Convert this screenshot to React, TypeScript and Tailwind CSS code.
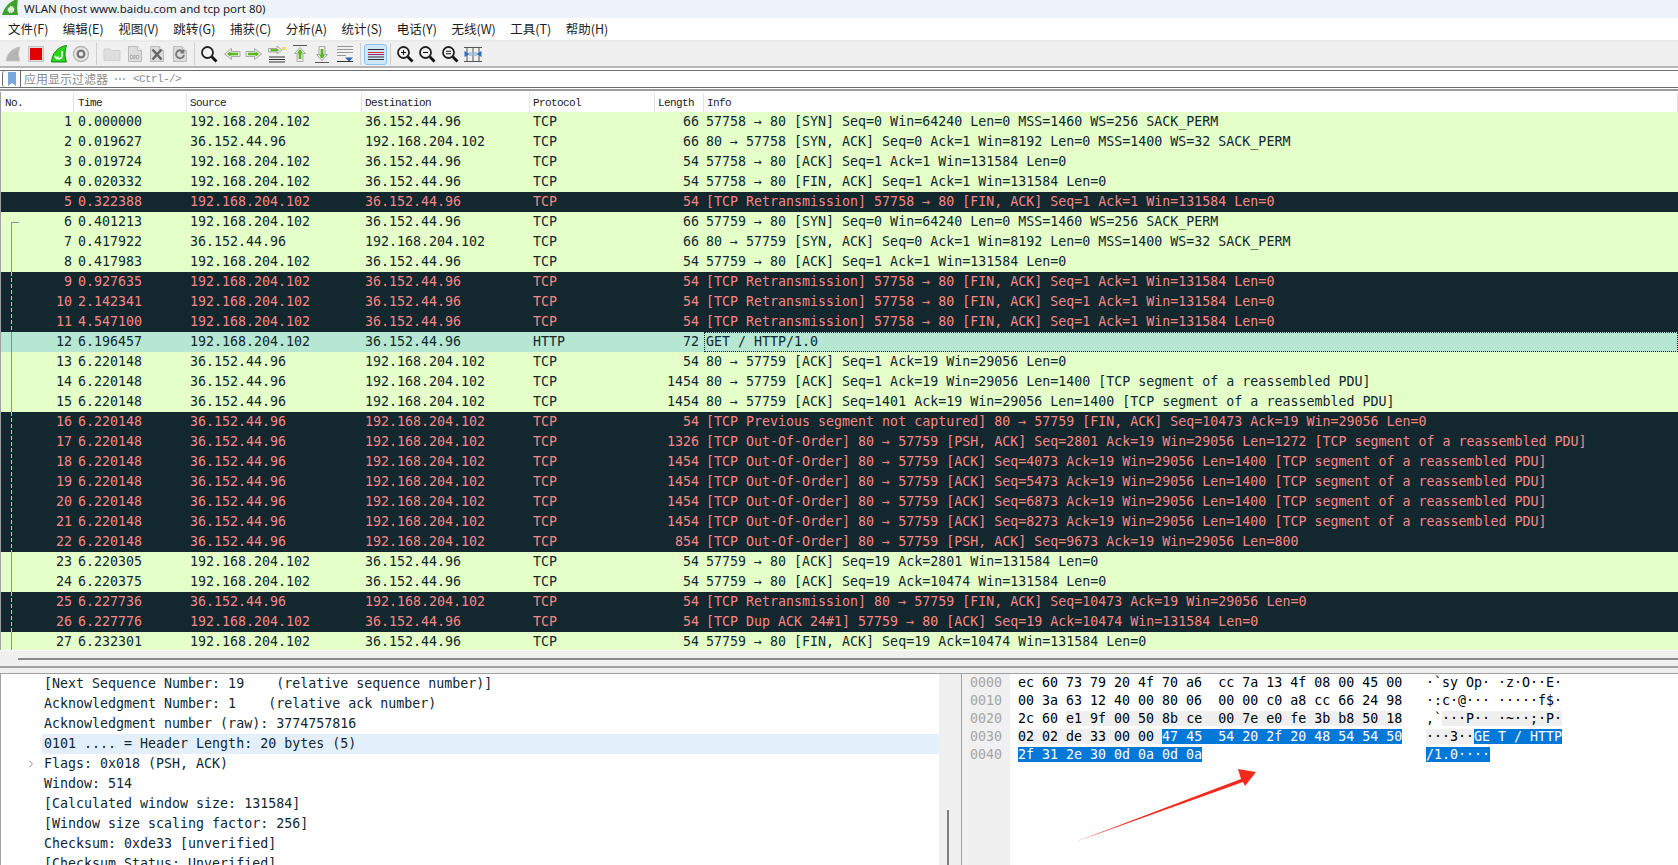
import React from 'react'
import { ChevronRight } from 'lucide-react'

type Kind = 'ok' | 'bad' | 'sel'
type Row = [number, string, string, string, string, number, string, Kind]

const A = '192.168.204.102'
const B = '36.152.44.96'

const rows: Row[] = [
  [1, '0.000000', A, B, 'TCP', 66, '57758 → 80 [SYN] Seq=0 Win=64240 Len=0 MSS=1460 WS=256 SACK_PERM', 'ok'],
  [2, '0.019627', B, A, 'TCP', 66, '80 → 57758 [SYN, ACK] Seq=0 Ack=1 Win=8192 Len=0 MSS=1400 WS=32 SACK_PERM', 'ok'],
  [3, '0.019724', A, B, 'TCP', 54, '57758 → 80 [ACK] Seq=1 Ack=1 Win=131584 Len=0', 'ok'],
  [4, '0.020332', A, B, 'TCP', 54, '57758 → 80 [FIN, ACK] Seq=1 Ack=1 Win=131584 Len=0', 'ok'],
  [5, '0.322388', A, B, 'TCP', 54, '[TCP Retransmission] 57758 → 80 [FIN, ACK] Seq=1 Ack=1 Win=131584 Len=0', 'bad'],
  [6, '0.401213', A, B, 'TCP', 66, '57759 → 80 [SYN] Seq=0 Win=64240 Len=0 MSS=1460 WS=256 SACK_PERM', 'ok'],
  [7, '0.417922', B, A, 'TCP', 66, '80 → 57759 [SYN, ACK] Seq=0 Ack=1 Win=8192 Len=0 MSS=1400 WS=32 SACK_PERM', 'ok'],
  [8, '0.417983', A, B, 'TCP', 54, '57759 → 80 [ACK] Seq=1 Ack=1 Win=131584 Len=0', 'ok'],
  [9, '0.927635', A, B, 'TCP', 54, '[TCP Retransmission] 57758 → 80 [FIN, ACK] Seq=1 Ack=1 Win=131584 Len=0', 'bad'],
  [10, '2.142341', A, B, 'TCP', 54, '[TCP Retransmission] 57758 → 80 [FIN, ACK] Seq=1 Ack=1 Win=131584 Len=0', 'bad'],
  [11, '4.547100', A, B, 'TCP', 54, '[TCP Retransmission] 57758 → 80 [FIN, ACK] Seq=1 Ack=1 Win=131584 Len=0', 'bad'],
  [12, '6.196457', A, B, 'HTTP', 72, 'GET / HTTP/1.0', 'sel'],
  [13, '6.220148', B, A, 'TCP', 54, '80 → 57759 [ACK] Seq=1 Ack=19 Win=29056 Len=0', 'ok'],
  [14, '6.220148', B, A, 'TCP', 1454, '80 → 57759 [ACK] Seq=1 Ack=19 Win=29056 Len=1400 [TCP segment of a reassembled PDU]', 'ok'],
  [15, '6.220148', B, A, 'TCP', 1454, '80 → 57759 [ACK] Seq=1401 Ack=19 Win=29056 Len=1400 [TCP segment of a reassembled PDU]', 'ok'],
  [16, '6.220148', B, A, 'TCP', 54, '[TCP Previous segment not captured] 80 → 57759 [FIN, ACK] Seq=10473 Ack=19 Win=29056 Len=0', 'bad'],
  [17, '6.220148', B, A, 'TCP', 1326, '[TCP Out-Of-Order] 80 → 57759 [PSH, ACK] Seq=2801 Ack=19 Win=29056 Len=1272 [TCP segment of a reassembled PDU]', 'bad'],
  [18, '6.220148', B, A, 'TCP', 1454, '[TCP Out-Of-Order] 80 → 57759 [ACK] Seq=4073 Ack=19 Win=29056 Len=1400 [TCP segment of a reassembled PDU]', 'bad'],
  [19, '6.220148', B, A, 'TCP', 1454, '[TCP Out-Of-Order] 80 → 57759 [ACK] Seq=5473 Ack=19 Win=29056 Len=1400 [TCP segment of a reassembled PDU]', 'bad'],
  [20, '6.220148', B, A, 'TCP', 1454, '[TCP Out-Of-Order] 80 → 57759 [ACK] Seq=6873 Ack=19 Win=29056 Len=1400 [TCP segment of a reassembled PDU]', 'bad'],
  [21, '6.220148', B, A, 'TCP', 1454, '[TCP Out-Of-Order] 80 → 57759 [ACK] Seq=8273 Ack=19 Win=29056 Len=1400 [TCP segment of a reassembled PDU]', 'bad'],
  [22, '6.220148', B, A, 'TCP', 854, '[TCP Out-Of-Order] 80 → 57759 [PSH, ACK] Seq=9673 Ack=19 Win=29056 Len=800', 'bad'],
  [23, '6.220305', A, B, 'TCP', 54, '57759 → 80 [ACK] Seq=19 Ack=2801 Win=131584 Len=0', 'ok'],
  [24, '6.220375', A, B, 'TCP', 54, '57759 → 80 [ACK] Seq=19 Ack=10474 Win=131584 Len=0', 'ok'],
  [25, '6.227736', B, A, 'TCP', 54, '[TCP Retransmission] 80 → 57759 [FIN, ACK] Seq=10473 Ack=19 Win=29056 Len=0', 'bad'],
  [26, '6.227776', A, B, 'TCP', 54, '[TCP Dup ACK 24#1] 57759 → 80 [ACK] Seq=19 Ack=10474 Win=131584 Len=0', 'bad'],
  [27, '6.232301', A, B, 'TCP', 54, '57759 → 80 [FIN, ACK] Seq=19 Ack=10474 Win=131584 Len=0', 'ok'],
]

const menus = ['文件(F)', '编辑(E)', '视图(V)', '跳转(G)', '捕获(C)', '分析(A)', '统计(S)', '电话(Y)', '无线(W)', '工具(T)', '帮助(H)']

const details = [
  '[Next Sequence Number: 19    (relative sequence number)]',
  'Acknowledgment Number: 1    (relative ack number)',
  'Acknowledgment number (raw): 3774757816',
  '0101 .... = Header Length: 20 bytes (5)',
  'Flags: 0x018 (PSH, ACK)',
  'Window: 514',
  '[Calculated window size: 131584]',
  '[Window size scaling factor: 256]',
  'Checksum: 0xde33 [unverified]',
  '[Checksum Status: Unverified]',
]

// plain / grey / blue segments per dump line: [text, style]
type Seg = [string, '' | 'g' | 'b']
const hexLines: { off: string; hex: Seg[]; asc: Seg[] }[] = [
  { off: '0000', hex: [['ec 60 73 79 20 4f 70 a6  cc 7a 13 4f 08 00 45 00', '']], asc: [['·`sy Op· ·z·O··E·', '']] },
  { off: '0010', hex: [['00 3a 63 12 40 00 80 06  00 00 c0 a8 cc 66 24 98', '']], asc: [['·:c·@··· ·····f$·', '']] },
  { off: '0020', hex: [['2c 60 ', ''], ['e1 9f 00 50 8b ce  00 7e e0 fe 3b b8 50 18', 'g']], asc: [[',`', ''], ['···P·· ·~··;·P·', 'g']] },
  { off: '0030', hex: [['02 02 de 33 00 00 ', 'g'], ['47 45  54 20 2f 20 48 54 54 50', 'b']], asc: [['···3··', 'g'], ['GE T / HTTP', 'b']] },
  { off: '0040', hex: [['2f 31 2e 30 0d 0a 0d 0a', 'b']], asc: [['/1.0····', 'b']] },
]

const Ic = ({ children }: { children: React.ReactNode }) => (
  <svg width="20" height="20" viewBox="0 0 20 20" fill="none">{children}</svg>
)

const Lens = ({ mark }: { mark?: 'plus' | 'minus' | 'eq' }) => (
  <Ic>
    <circle cx="8.5" cy="8.5" r="5.5" fill="#f4f4f4" stroke="#222" strokeWidth="1.8" />
    <path d="M12.8 12.8 L17.5 17.5" stroke="#111" strokeWidth="2.8" />
    {mark && <path d={mark === 'plus' ? 'M6 8.5h5M8.5 6v5' : mark === 'minus' ? 'M6 8.5h5' : 'M6 7.3h5M6 9.8h5'} stroke="#111" strokeWidth="1.1" />}
  </Ic>
)

const FileIc = ({ children }: { children: React.ReactNode }) => (
  <Ic>
    <path d="M3.5 2.5h9l4 4v11h-13z" fill="#dcdcdc" stroke="#bcbcbc" />
    <path d="M12.5 2.5v4h4" fill="#f2f2f2" stroke="#bcbcbc" />
    {children}
  </Ic>
)

const HArrow = ({ flip }: { flip?: boolean }) => (
  <g transform={flip ? 'translate(20 0) scale(-1 1)' : undefined}>
    <path d="M2 7.5h8.5V4.5l7 5.5-7 5.5v-3H2z" fill="#efefef" stroke="#a8a8a8" />
    <path d="M4 10h8" stroke="#59b81f" strokeWidth="2.6" />
    <path d="M11.5 7.2 15 10l-3.500 2.800z" fill="#59b81f" />
  </g>
)

const VArrow = ({ down }: { down?: boolean }) => (
  <g transform={down ? 'translate(0 20) scale(1 -1)' : undefined}>
    <path d="M3 1.500h14" stroke="#555" />
    <path d="M10 3.500 15.500 9.500H13v8H7v-8H4.500z" fill="#efefef" stroke="#a8a8a8" />
    <path d="M10 6v9" stroke="#59b81f" strokeWidth="2.8" />
    <path d="M6.800 9.500 10 5.500l3.200 4z" fill="#59b81f" />
  </g>
)

const Reload = ({ color }: { color: string }) => (
  <path d="M13 7.500a4 4 0 1 0 1 3.500M13.500 5.500v3h-3" stroke={color} strokeWidth="1.8" />
)

const icons: React.ReactNode[] = [
  <Ic><path d="M3 17C4 10 9 4 17 3 15 8 15 13 17 17z" fill="#b4b4b4" stroke="#c8c8c8" /></Ic>,
  <Ic><rect x="2.500" y="2.500" width="15" height="15" fill="#ddd" stroke="#c4c4c4" /><rect x="4" y="4" width="12" height="12" fill="#e00000" /></Ic>,
  <Ic>
    <path d="M2.500 18C3 10 8 3 17.500 1.500 15.500 7 15.500 13 17.500 18z" fill="#25dc14" stroke="#16801a" />
    <path d="M13 7v5a3 3 0 0 1-5.500 1.500M5.800 12l1.800 2.300 2-1.700" stroke="#fff" strokeWidth="1.700" />
  </Ic>,
  <Ic>
    <circle cx="10" cy="10" r="7.500" fill="#e8e8e8" stroke="#b4b4b4" strokeWidth="1.300" />
    <circle cx="10" cy="10" r="4.500" fill="#777" />
    <circle cx="10" cy="10" r="2.200" fill="#e8e8e8" />
  </Ic>,
  'sepA',
  <Ic><path d="M2 5h6l1.500 1.500H18v10H2z" fill="#dedede" stroke="#cfcfcf" /></Ic>,
  <FileIc><path d="M5.500 11.500h2v3h-2zM9 11.500h1v3H9zM11.500 11.500h2v3h-2z" fill="#f4f4f4" stroke="#888" strokeWidth=".6" /></FileIc>,
  <FileIc><path d="M5.500 5.500 14.500 15.500M14.500 5.500 5.500 15.500" stroke="#666" strokeWidth="2.600" /></FileIc>,
  <FileIc><Reload color="#777" /></FileIc>,
  'sepB',
  <Lens />,
  <Ic><HArrow flip /></Ic>,
  <Ic><HArrow /></Ic>,
  <Ic>
    <path d="M2 13h16M2 15.500h16M2 18h16" stroke="#333" />
    <path d="M1.500 4.500h8.500V2l5 4-5 4V8H1.500z" fill="#eee" stroke="#a8a8a8" />
    <path d="M3.500 6.200h8" stroke="#59b81f" strokeWidth="2.200" />
    <rect x="15.500" y="3" width="3" height="3" fill="#f5d33a" />
  </Ic>,
  <Ic><VArrow /></Ic>,
  <Ic><VArrow down /></Ic>,
  <Ic>
    <path d="M2 2.500h16M2 5.500h16M2 8.500h16M2 11.500h9" stroke="#999" />
    <path d="M10 13.500h8l-4 4z" fill="#2c62a8" />
    <path d="M2 17.500h16" stroke="#333" />
  </Ic>,
  'sepA',
  'colorize',
  'sepB',
  <Lens mark="plus" />,
  <Lens mark="minus" />,
  <Lens mark="eq" />,
  <Ic>
    <path d="M1 3.500h18M1 17.500h18M4 3v15M10 3v15M16 3v15" stroke="#555" />
    <path d="M1.500 7 6.500 10 1.500 13zM18.500 7 13.500 10l5 3z" fill="#2c6cb8" />
    <path d="M6 8h8v4H6z" fill="#9cb8d8" opacity=".7" />
  </Ic>,
]

const DejaVu = "font-['DejaVu_Sans_Mono',monospace]"

function Toolbar() {
  return (
    <div className="flex h-[26px] shrink-0 items-center border-t-2 border-[#e9e9e9] bg-[#f0f0f0] pl-[2px]">
      {icons.map((ic, i) =>
        ic === 'sepA' || ic === 'sepB' ? (
          <div key={i} className={`flex h-[22px] justify-center ${ic === 'sepA' ? 'w-[8px]' : 'w-[6px]'}`}>
            <div className="h-full w-px bg-[#cfcfcf]" />
          </div>
        ) : ic === 'colorize' ? (
          <div key={i} className="flex h-[21px] w-[23px] items-center justify-center rounded-[3px] border border-[#8cc4ee] bg-[#cde6f9]">
            <svg width="16" height="12" viewBox="0 0 16 12"><path d="M0 1.500h16M0 9h16M0 11.500h16" stroke="#333" /><path d="M0 4.500h16" stroke="#d83030" /><path d="M0 6.500h16" stroke="#a02060" /></svg>
          </div>
        ) : (
          <div key={i} className="flex w-[22.7px] justify-center">{ic}</div>
        ),
      )}
    </div>
  )
}

function FilterBar() {
  return (
    <div className="mt-[2px] flex h-[18px] shrink-0 border-y border-[#6d6d6d] bg-white pl-[2px]">
      <div className="flex w-[19px] justify-center rounded-l-[3px] border-x border-[#6d6d6d] pt-px">
        <svg width="10" height="14" viewBox="0 0 10 14"><path d="M1 0h8v14L5 11l-4 3z" fill="#7aa8dc" /></svg>
      </div>
      <div className="flex items-center pl-[3px] text-[#8c8c8c]">
        <span className="font-['Noto_Sans_CJK_SC',sans-serif] text-[12px] leading-none">应用显示过滤器</span>
        <span className="ml-[6px] font-['Noto_Sans',sans-serif] text-[12px] leading-none">⋯</span>
        <span className="ml-[7px] font-['Liberation_Mono',monospace] text-[11px] tracking-[-0.6px]">{'<Ctrl-/>'}</span>
      </div>
    </div>
  )
}

function PacketRow({ r }: { r: Row }) {
  const [no, time, src, dst, proto, len, info, kind] = r
  const tone =
    kind === 'bad' ? 'bg-[#12272e] text-[#f78787]' : kind === 'sel' ? 'bg-[#b5e7d3] text-[#12272e]' : 'bg-[#e4ffc7] text-[#12272e]'
  return (
    <div className={`flex h-5 shrink-0 items-center whitespace-pre text-[13.3px] leading-5 ${tone}`}>
      <div className="w-[73px] pr-[2px] text-right">{no}</div>
      <div className="w-[113px] pl-[4px]">{time}</div>
      <div className="w-[175px] pl-[3px]">{src}</div>
      <div className="w-[168px] pl-[3px]">{dst}</div>
      <div className="w-[125px] pl-[3px]">{proto}</div>
      <div className="w-[49px] pr-[5px] text-right">{len}</div>
      {kind === 'sel' ? (
        <div className="h-5 flex-1 border border-dotted border-[#12272e] pl-px leading-[18px]">{info}</div>
      ) : (
        <div className="flex-1 pl-[2px]">{info}</div>
      )}
    </div>
  )
}

function PacketList() {
  const heads = [
    ['No.', 'w-[73px] pl-[4px]'],
    ['Time', 'w-[113px] pl-[4px]'],
    ['Source', 'w-[175px] pl-[3px]'],
    ['Destination', 'w-[168px] pl-[3px]'],
    ['Protocol', 'w-[125px] pl-[3px]'],
    ['Length', 'w-[49px] pl-[3px]'],
    ['Info', 'flex-1 pl-[3px]'],
  ]
  return (
    <div className="relative flex h-[558px] shrink-0 flex-col overflow-hidden border-l border-[#a0a0a0]">
      <div className="flex h-5 shrink-0 bg-white pt-px font-['Liberation_Mono',monospace] text-[11px] leading-5 tracking-[-0.6px] text-[#222]">
        {heads.map(([h, c]) => (
          <div key={h} className={`${c} border-r border-[#e3e3e3]`}>{h}</div>
        ))}
      </div>
      {rows.map((r) => <PacketRow key={r[0]} r={r} />)}
      {/* conversation bracket in the gutter: solid on light rows, dashed on dark rows */}
      <svg className="absolute left-0 top-0" width="22" height="558" fill="none">
        <path d="M18 130.500H10.500V180M10.500 240V320M10.500 460V500M10.500 540V558" stroke="#8a8f94" />
        <path d="M10.500 180V240M10.500 320V460M10.500 500V540" stroke="#f3b3b3" strokeDasharray="4 2" />
      </svg>
    </div>
  )
}

const segTone = { '': '', g: 'bg-[#efefef]', b: 'bg-[#0078d7] text-white' }

function Segs({ segs }: { segs: Seg[] }) {
  return (
    <>
      {segs.map(([t, s], i) => <span key={i} className={segTone[s]}>{t}</span>)}
    </>
  )
}

function DetailPane() {
  return (
    <div className="relative flex w-[956px] shrink-0 overflow-hidden border-l border-[#a0a0a0] bg-white">
      <div className="w-[938px] shrink-0 text-[13.3px] leading-5 text-[#12272e]">
        {details.map((d, i) => (
          <div key={d} className={`relative h-5 whitespace-pre pl-[43px] ${i === 3 ? 'bg-[linear-gradient(to_right,#fff_41px,#e3f0fb_41px)]' : ''}`}>
            {i === 4 && <ChevronRight className="absolute left-[24px] top-[4px] text-[#8a8a8a]" size={12} strokeWidth={2} />}
            {d}
          </div>
        ))}
      </div>
      <div className="flex flex-1 justify-center bg-[#f0f0f0] pt-[136px]">
        <div className="h-full w-[2px] bg-[#808080]" />
      </div>
    </div>
  )
}

function HexPane() {
  return (
    <div className="relative ml-[5px] flex flex-1 overflow-hidden border-l border-[#a0a0a0] bg-white text-[13.3px] leading-[18px] text-black">
      <div className="w-[48px] shrink-0 bg-[#f0f0f0] pl-[8px] text-[#a5a5a5]">
        {hexLines.map((l) => <div key={l.off} className="h-[18px]">{l.off}</div>)}
      </div>
      <div className="w-[416px] shrink-0 whitespace-pre pl-[8px]">
        {hexLines.map((l) => <div key={l.off} className="h-[18px]"><Segs segs={l.hex} /></div>)}
      </div>
      <div className="flex-1 whitespace-pre">
        {hexLines.map((l) => <div key={l.off} className="h-[18px]"><Segs segs={l.asc} /></div>)}
      </div>
    </div>
  )
}

export default function App() {
  return (
    <div className={`relative flex h-[865px] w-[1678px] flex-col overflow-hidden bg-white ${DejaVu}`}>
      {/* title bar */}
      <div className="flex h-[18px] shrink-0 items-center bg-[#eef3fa] pl-[2px] font-['Noto_Sans',sans-serif] text-[11.5px] text-[#1c1c1c]">
        <svg width="17" height="18" viewBox="0 0 17 18" className="mr-[5px]">
          <path d="M0 15C2 8 7 1 16 -1 15 5 15 10 16 15z" fill="#3f9f2f" />
          <path d="M8.500 5.500l1.200 1 1.500-.2.300 1.500 1.200.9-.8 1.300.3 1.500-1.500.4-.8 1.300-1.400-.7-1.400.4-.6-1.400-1.300-.8.7-1.300-.2-1.500 1.500-.3z" fill="#d8efd0" />
        </svg>
        WLAN (host www.baidu.com and tcp port 80)
      </div>

      {/* menu bar */}
      <div className="flex h-[22px] shrink-0 items-center gap-[14.5px] pl-[8px] font-['Noto_Sans_CJK_SC',sans-serif] text-[12.5px] text-[#1c1c1c]">
        {menus.map((m) => <span key={m} className="whitespace-pre">{m}</span>)}
      </div>

      <Toolbar />
      <div className="h-[2px] shrink-0 bg-[#b5b5b5]" />
      <FilterBar />
      <div className="mt-px h-[2px] shrink-0 bg-[#9c9c9c]" />
      <div className="h-px shrink-0 bg-white" />

      <PacketList />

      {/* horizontal scrollbar */}
      <div className="flex h-[16px] shrink-0 items-center border-t border-white bg-[#f0f0f0] pl-[18px]">
        <div className="h-[2px] flex-1 bg-[#8a8a8a]" />
      </div>
      <div className="h-[2px] shrink-0 bg-[#a0a0a0]" />
      <div className="flex h-[5px] shrink-0 bg-[#f0f0f0]" />
      <div className="h-px shrink-0 bg-[#a0a0a0]" />

      <div className="flex min-h-0 flex-1 bg-[#f0f0f0]">
        <DetailPane />
        <HexPane />
      </div>

      {/* hand-drawn annotation arrow */}
      <svg className="pointer-events-none absolute left-0 top-0" width="1678" height="865">
        <path d="M1075 842 L1241 779 L1238 769 L1256 772 L1245 786 L1243 782 Z" fill="#f52a1c" />
      </svg>
    </div>
  )
}
